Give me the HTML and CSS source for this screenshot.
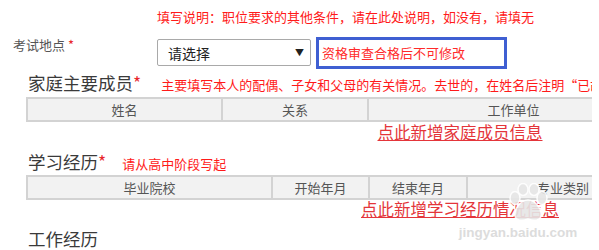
FILE: index.html
```html
<!DOCTYPE html>
<html lang="zh-CN">
<head>
<meta charset="utf-8">
<title>报名信息</title>
<link rel="stylesheet" href="styles.css">
</head>
<body>
<div class="page">
  <div class="tip">填写说明：职位要求的其他条件，请在此处说明，如没有，请填无</div>

  <div class="field">
    <div class="label">考试地点 <span class="req">*</span></div>
    <div class="select"><span>请选择</span><span class="arrow">▼</span></div>
    <div class="notice">资格审查合格后不可修改</div>
  </div>

  <div class="section-head">
    <h2 class="title">家庭主要成员<span class="star">*</span></h2>
    <span class="note">主要填写本人的配偶、子女和父母的有关情况。去世的，在姓名后注明“已故”</span>
  </div>
  <div class="thead family">
    <div class="th">姓名</div>
    <div class="th">关系</div>
    <div class="th">工作单位</div>
  </div>
  <div class="add-row"><a class="add" href="#">点此新增家庭成员信息</a></div>

  <div class="section-head second">
    <h2 class="title">学习经历<span class="star">*</span></h2>
    <span class="note">请从高中阶段写起</span>
  </div>
  <div class="thead study">
    <div class="th">毕业院校</div>
    <div class="th">开始年月</div>
    <div class="th">结束年月</div>
    <div class="th">专业类别</div>
  </div>
  <div class="add-row tight"><a class="add" href="#">点此新增学习经历情况信息</a></div>

  <div class="section-head third">
    <h2 class="title">工作经历</h2>
  </div>

  <div class="watermark">
    <svg class="paw" width="44" height="40" viewBox="0 0 44 40">
      <g fill="#e6e6e6" stroke="#ffffff" stroke-width="1.5" opacity="0.9">
        <ellipse cx="9" cy="15" rx="5" ry="6.5"/>
        <ellipse cx="17" cy="6.5" rx="5" ry="6"/>
        <ellipse cx="28" cy="6.5" rx="5" ry="6"/>
        <ellipse cx="36" cy="15" rx="5" ry="6.5"/>
        <path d="M22 17 C14 17 8 27 9 33 C10 38 16 38 22 36 C28 38 34 38 35 33 C36 27 30 17 22 17 Z"/>
      </g>
    </svg>
    <div class="wm-text">jingyan.baidu.com</div>
  </div>
</div>
</body>
</html>
```

FILE: styles.css
```css
* {
  box-sizing: border-box;
}

html, body {
  margin: 0;
  padding: 0;
  background: #ffffff;
}

body {
  font-family: "Noto Sans CJK SC", "Noto Sans", sans-serif;
  color: #333333;
}

.page {
  position: relative;
  width: 592px;
  height: 250px;
  overflow: hidden;
}

.tip {
  margin-top: 7px;
  padding-left: 157px;
  font-size: 13px;
  line-height: 20px;
  color: #ff1a1a;
  white-space: nowrap;
}

.field {
  display: flex;
  margin-top: 10px;
  height: 32px;
}

.label {
  width: 157px;
  padding-left: 13px;
  font-size: 13px;
  line-height: 16px;
  color: #555555;
}

.req {
  color: #e8262b;
}

.select {
  display: flex;
  justify-content: space-between;
  align-items: center;
  width: 154px;
  height: 27px;
  margin-top: 2px;
  padding: 0 6px 0 10px;
  border: 1px solid #a9a9a9;
  border-radius: 2px;
  font-size: 14px;
  color: #222222;
}

.arrow {
  font-size: 9px;
  color: #222222;
}

.notice {
  width: 191px;
  height: 32px;
  margin-left: 5px;
  padding-left: 3px;
  border: 3px solid #3f5fd2;
  font-size: 13px;
  line-height: 26px;
  color: #ff2a2a;
  white-space: nowrap;
}

.section-head {
  display: flex;
  align-items: baseline;
  margin-top: 2px;
  padding-left: 28px;
  height: 24px;
  white-space: nowrap;
}

.section-head.second {
  margin-top: 8px;
}

.section-head.third {
  margin-top: 9px;
}

.title {
  margin: 0;
  font-size: 17.5px;
  font-weight: normal;
  line-height: 24px;
  color: #3a3a3a;
}

.star {
  color: #e8262b;
}

.note {
  margin-left: 20px;
  font-size: 13px;
  color: #ff1a1a;
}

.second .note {
  margin-left: 16px;
}

.thead {
  display: grid;
  width: 634px;
  margin-top: 2px;
  margin-left: 26px;
  border: 2px solid #d3d3d3;
  background: #f2f2f2;
}

.thead.family {
  grid-template-columns: 193px 146px 291px;
}

.thead.study {
  margin-top: 1px;
  grid-template-columns: 243px 97px 98px 192px;
}

.th {
  height: 21px;
  font-size: 13px;
  line-height: 21px;
  text-align: center;
  color: #555555;
}

.th + .th {
  border-left: 2px solid #d3d3d3;
}

.add-row {
  padding-left: 328px;
  width: 592px;
  text-align: center;
  line-height: 20px;
  height: 20px;
}

.add-row.tight {
  line-height: 18px;
  height: 18px;
}

.add {
  font-size: 16.5px;
  color: #e4353a;
  text-decoration: underline;
  white-space: nowrap;
}

.watermark {
  position: absolute;
  left: 458px;
  top: 183px;
  width: 120px;
  display: flex;
  flex-direction: column;
  align-items: center;
  pointer-events: none;
}

.paw {
  display: block;
  margin-left: 20px;
}

.wm-text {
  margin-top: 2px;
  font-family: "Liberation Sans", Arial, sans-serif;
  font-weight: bold;
  font-size: 13.5px;
  color: #dcdcdc;
  text-shadow: 0 0 1px #ffffff;
}
```
